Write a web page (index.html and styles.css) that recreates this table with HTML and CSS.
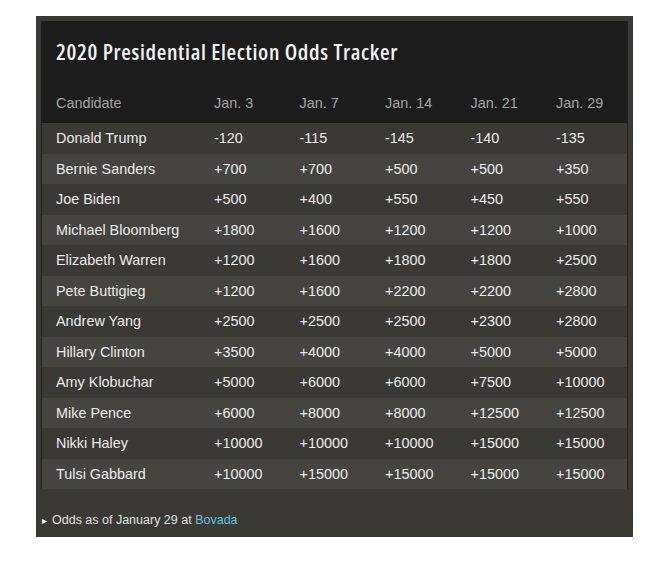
FILE: index.html
```html
<!DOCTYPE html>
<html>
<head>
<meta charset="utf-8">
<link rel="stylesheet" href="styles.css">
</head>
<body>
<div class="page">
  <div class="outer">
    <div class="panel">
      <h1 class="title">2020 Presidential Election Odds Tracker</h1>
      <div class="table">
        <div class="row head"><span>Candidate</span><span>Jan. 3</span><span>Jan. 7</span><span>Jan. 14</span><span>Jan. 21</span><span>Jan. 29</span></div>
        <div class="row odd"><span>Donald Trump</span><span>-120</span><span>-115</span><span>-145</span><span>-140</span><span>-135</span></div>
        <div class="row even"><span>Bernie Sanders</span><span>+700</span><span>+700</span><span>+500</span><span>+500</span><span>+350</span></div>
        <div class="row odd"><span>Joe Biden</span><span>+500</span><span>+400</span><span>+550</span><span>+450</span><span>+550</span></div>
        <div class="row even"><span>Michael Bloomberg</span><span>+1800</span><span>+1600</span><span>+1200</span><span>+1200</span><span>+1000</span></div>
        <div class="row odd"><span>Elizabeth Warren</span><span>+1200</span><span>+1600</span><span>+1800</span><span>+1800</span><span>+2500</span></div>
        <div class="row even"><span>Pete Buttigieg</span><span>+1200</span><span>+1600</span><span>+2200</span><span>+2200</span><span>+2800</span></div>
        <div class="row odd"><span>Andrew Yang</span><span>+2500</span><span>+2500</span><span>+2500</span><span>+2300</span><span>+2800</span></div>
        <div class="row even"><span>Hillary Clinton</span><span>+3500</span><span>+4000</span><span>+4000</span><span>+5000</span><span>+5000</span></div>
        <div class="row odd"><span>Amy Klobuchar</span><span>+5000</span><span>+6000</span><span>+6000</span><span>+7500</span><span>+10000</span></div>
        <div class="row even"><span>Mike Pence</span><span>+6000</span><span>+8000</span><span>+8000</span><span>+12500</span><span>+12500</span></div>
        <div class="row odd"><span>Nikki Haley</span><span>+10000</span><span>+10000</span><span>+10000</span><span>+15000</span><span>+15000</span></div>
        <div class="row even"><span>Tulsi Gabbard</span><span>+10000</span><span>+15000</span><span>+15000</span><span>+15000</span><span>+15000</span></div>
      </div>
    </div>
    <div class="footer"><span class="caret">&#9656;</span><span>Odds as of January 29 at <span class="link">Bovada</span></span></div>
  </div>
</div>
</body>
</html>
```

FILE: styles.css
```css
html, body {
  margin: 0;
  padding: 0;
  background: #ffffff;
}
.page {
  padding: 16px 0 0 36px;
}
.outer {
  width: 597px;
  height: 521px;
  box-sizing: border-box;
  background: #3a3935;
  padding: 5px 5px 0 5px;
  font-family: "Liberation Sans", Arial, sans-serif;
}
.panel {
  background: #1c1c1c;
  border: 1px solid #202020;
  box-sizing: border-box;
  height: 468px;
}
.title {
  margin: 0;
  height: 64px;
  box-sizing: border-box;
  padding: 15px 0 0 14px;
  font-family: "Open Sans", sans-serif;
  font-weight: 600;
  font-size: 22px;
  font-stretch: 75%;
  letter-spacing: 0.65px;
  color: #f2f2f2;
  line-height: 28px;
}
.row {
  display: grid;
  grid-template-columns: 172px 85.5px 85.5px 85.5px 85.5px 1fr;
  height: 30.5px;
  align-items: center;
  font-size: 14.4px;
  color: #ececec;
}
.row span:first-child {
  padding-left: 14px;
}
.row.head {
  height: 37px;
  box-sizing: border-box;
  padding-bottom: 3px;
  color: #a3a3a3;
}
.row.odd {
  background: #3a3935;
}
.row.even {
  background: #454440;
}
.footer {
  display: flex;
  align-items: center;
  gap: 5px;
  padding: 24px 0 0 1px;
  font-size: 12.5px;
  color: #e0e0e0;
}
.caret {
  font-size: 10px;
  color: #ffffff;
}
.link {
  color: #5cc8dc;
}
```
